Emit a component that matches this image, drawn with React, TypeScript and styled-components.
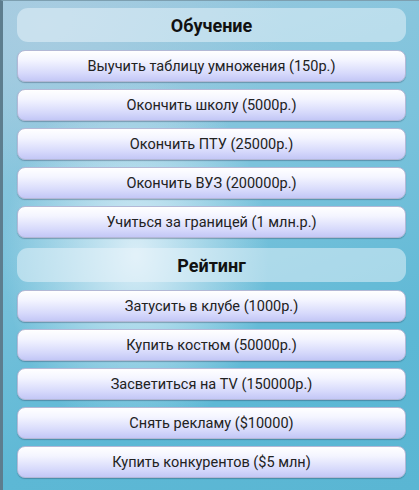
import styled, { createGlobalStyle } from 'styled-components'

const Global = createGlobalStyle`
  html, body {
    margin: 0;
    padding: 0;
    height: 100%;
  }
  body {
    font-family: Roboto, "Liberation Sans", Arial, sans-serif;
    overflow: hidden;
  }
`

const Screen = styled.div`
  width: 419px;
  height: 490px;
  box-sizing: border-box;
  border-left: 3px solid #5d7d8e;
  border-top: 1px solid #7d9fb0;
  padding: 7px 13px 0 14px;
  display: flex;
  flex-direction: column;
  background:
    radial-gradient(ellipse 190px 260px at 32% 52%, rgba(235, 245, 252, 0.85), rgba(235, 245, 252, 0) 70%),
    radial-gradient(ellipse 300px 200px at 10% 5%, rgba(170, 205, 225, 0.9), rgba(170, 205, 225, 0) 80%),
    linear-gradient(160deg, #9cc9df 0%, #7cc3dc 40%, #5db8d5 75%, #5ab6d3 100%);
`

const Section = styled.div`
  display: flex;
  flex-direction: column;
  gap: 7px;
  & + & {
    margin-top: 10px;
  }
`

const Title = styled.div`
  height: 34px;
  border-radius: 11px;
  background: rgba(235, 246, 252, 0.5);
  display: flex;
  align-items: center;
  justify-content: center;
  font-size: 18px;
  font-weight: 700;
  color: #111;
  margin-bottom: 1px;
`

const Button = styled.button`
  height: 32px;
  border-radius: 8px;
  border: 1px solid #b3b8d6;
  background: linear-gradient(180deg, #ffffff 0%, #f4f5ff 30%, #d6d9fb 75%, #c3c7f6 100%);
  box-shadow: 0 1px 1px rgba(40, 60, 90, 0.35);
  font-family: Roboto, "Liberation Sans", Arial, sans-serif;
  font-size: 14.5px;
  color: #222;
  padding: 0;
  cursor: pointer;
`

const education = [
  'Выучить таблицу умножения (150р.)',
  'Окончить школу (5000р.)',
  'Окончить ПТУ (25000р.)',
  'Окончить ВУЗ (200000р.)',
  'Учиться за границей (1 млн.р.)',
]

const rating = [
  'Затусить в клубе (1000р.)',
  'Купить костюм (50000р.)',
  'Засветиться на TV (150000р.)',
  'Снять рекламу ($10000)',
  'Купить конкурентов ($5 млн)',
]

export default function App() {
  return (
    <>
      <Global />
      <Screen>
        <Section>
          <Title>Обучение</Title>
          {education.map((t) => (
            <Button key={t}>{t}</Button>
          ))}
        </Section>
        <Section>
          <Title>Рейтинг</Title>
          {rating.map((t) => (
            <Button key={t}>{t}</Button>
          ))}
        </Section>
      </Screen>
    </>
  )
}
